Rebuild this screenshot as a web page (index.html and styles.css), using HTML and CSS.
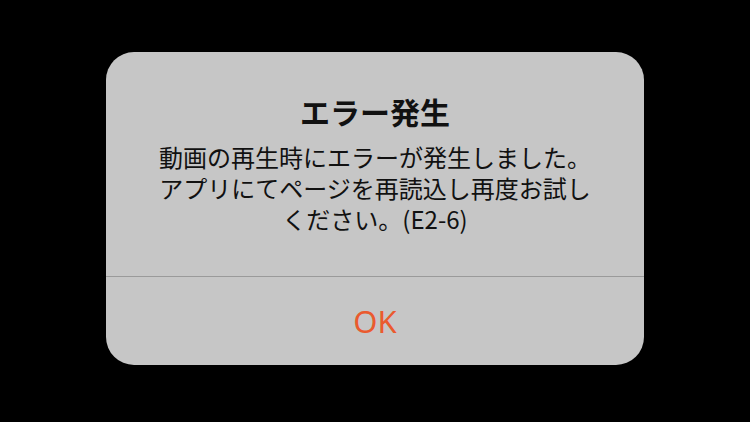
FILE: index.html
```html
<!DOCTYPE html>
<html lang="ja">
<head>
<meta charset="utf-8">
<link rel="stylesheet" href="styles.css">
</head>
<body>
<div class="screen">
  <div class="dialog">
    <div class="content">
      <div class="title">エラー発生</div>
      <div class="message">
        <div class="line">動画の再生時にエラーが発生しました。</div>
        <div class="line">アプリにてページを再読込し再度お試し</div>
        <div class="line">ください。(E2-6)</div>
      </div>
    </div>
    <div class="actions">
      <div class="button">OK</div>
    </div>
  </div>
</div>
</body>
</html>
```

FILE: styles.css
```css
html, body {
  margin: 0;
  padding: 0;
  background: #000;
}
.screen {
  width: 750px;
  height: 422px;
  display: flex;
  justify-content: center;
  align-items: flex-start;
  padding-top: 52px;
  box-sizing: border-box;
  font-family: "Noto Sans CJK JP", "Noto Sans", sans-serif;
}
.dialog {
  width: 538px;
  height: 313px;
  background: #c6c6c6;
  border-radius: 28px;
  display: flex;
  flex-direction: column;
  overflow: hidden;
}
.content {
  padding-top: 41px;
  height: 225px;
  box-sizing: border-box;
  border-bottom: 1px solid #9a9a9a;
  text-align: center;
  color: #111;
}
.title {
  font-size: 30px;
  font-weight: 700;
  line-height: 36px;
}
.message {
  margin-top: 12px;
  font-size: 24px;
}
.line {
  height: 31px;
  line-height: 31px;
}
.actions {
  flex: 1;
  display: flex;
  align-items: center;
  justify-content: center;
}
.button {
  color: #ea5a2e;
  font-size: 31px;
  font-family: "Noto Sans", "Noto Sans CJK JP", sans-serif;
  line-height: 40px;
}
```
